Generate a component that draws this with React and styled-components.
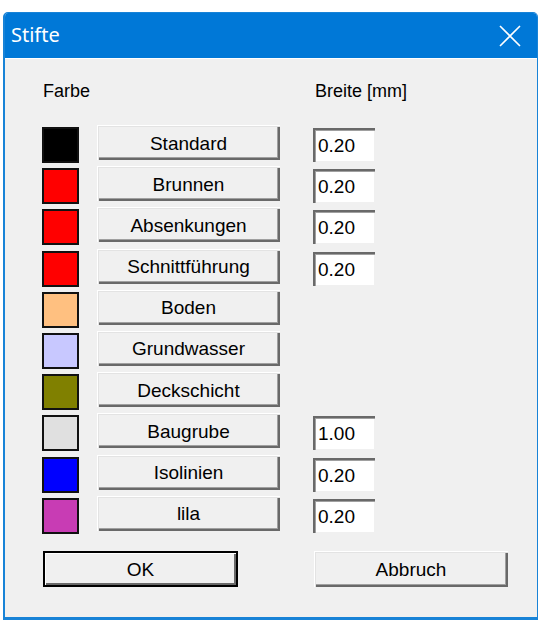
import React from 'react';
import styled, { createGlobalStyle } from 'styled-components';

const GlobalStyle = createGlobalStyle`
  html, body {
    margin: 0;
    padding: 0;
    background: #ffffff;
  }
  body {
    font-family: "Liberation Sans", Arial, sans-serif;
  }
`;

const Window = styled.div`
  margin: 12px 0 0 3px;
  width: 535px;
  height: 608px;
  box-sizing: border-box;
  border: 1px solid #1883d7;
  border-left-width: 2px;
  border-bottom-width: 3px;
  border-radius: 5px 5px 0 0;
  background: #f0f0f0;
  display: flex;
  flex-direction: column;
  overflow: hidden;
`;

const TitleBar = styled.div`
  height: 45px;
  background: #0078d7;
  display: flex;
  align-items: center;
  justify-content: space-between;
  padding: 0 16px 0 6px;
  flex-shrink: 0;
`;

const Title = styled.span`
  font-family: "Noto Sans", "Open Sans", sans-serif;
  font-size: 20px;
  color: #ffffff;
  padding-bottom: 2px;
`;

const Body = styled.div`
  flex: 1;
  border-top: 1px solid #ffffff;
  padding: 21px 0 0 37px;
  display: flex;
  flex-direction: column;
`;

const HeaderRow = styled.div`
  display: flex;
  height: 22px;
  margin-bottom: 23px;
`;

const Label = styled.span`
  font-size: 18px;
  color: #000;
  line-height: 22px;
  width: ${({ $w }) => $w}px;
  padding-left: 1px;
`;

const Rows = styled.div`
  display: flex;
  flex-direction: column;
  gap: 6px;
`;

const Row = styled.div`
  display: flex;
  align-items: flex-start;
  height: 35.2px;
`;

const Swatch = styled.div`
  width: 37px;
  height: 36px;
  box-sizing: border-box;
  border: 2px solid #111;
  background: ${({ $c }) => $c};
  margin-top: 2px;
  margin-right: 18px;
  flex-shrink: 0;
`;

const RaisedButton = styled.button`
  width: ${({ $w }) => $w}px;
  height: ${({ $h }) => $h || 35}px;
  box-sizing: border-box;
  background: #f0f0f0;
  font-family: "Liberation Sans", Arial, sans-serif;
  font-size: 19px;
  color: #000;
  padding: 2px 0 0 0;
  border: none;
  border-radius: 0;
  box-shadow: ${({ $default }) =>
    $default
      ? 'inset 2px 2px 0 #000, inset -2px -2px 0 #000, inset 3px 3px 0 #ffffff, inset -4px -4px 0 #696969'
      : 'inset 1px 1px 0 #ffffff, inset 2px 2px 0 #e3e3e3, inset -2px -2px 0 #696969, inset -3px -3px 0 #a0a0a0'};
  flex-shrink: 0;
`;

const Spacer = styled.div`
  width: 33px;
  flex-shrink: 0;
`;

const Field = styled.input`
  width: 62px;
  height: 34px;
  margin-top: 3px;
  box-sizing: border-box;
  border: none;
  outline: none;
  background: #ffffff;
  font-family: "Liberation Sans", Arial, sans-serif;
  font-size: 19px;
  color: #000;
  padding: 2px 0 0 5px;
  box-shadow: inset 2px 2px 0 #696969, inset 3px 3px 0 #a0a0a0, inset -1px -1px 0 #f0f0f0;
`;

const Footer = styled.div`
  display: flex;
  margin-top: 20px;
  padding-left: 1px;
  gap: 76px;
`;

const CloseIcon = () => (
  <svg width="22" height="22" viewBox="0 0 22 22">
    <path d="M1 1 L21 21 M21 1 L1 21" stroke="#ffffff" strokeWidth="1.6" fill="none" />
  </svg>
);

const pens = [
  { name: 'Standard', color: '#000000', width: '0.20' },
  { name: 'Brunnen', color: '#ff0000', width: '0.20' },
  { name: 'Absenkungen', color: '#ff0000', width: '0.20' },
  { name: 'Schnittführung', color: '#ff0000', width: '0.20' },
  { name: 'Boden', color: '#ffc080', width: null },
  { name: 'Grundwasser', color: '#c8c8ff', width: null },
  { name: 'Deckschicht', color: '#808000', width: null },
  { name: 'Baugrube', color: '#e0e0e0', width: '1.00' },
  { name: 'Isolinien', color: '#0000ff', width: '0.20' },
  { name: 'lila', color: '#c83cb4', width: '0.20' },
];

export default function App() {
  return (
    <>
      <GlobalStyle />
      <Window>
        <TitleBar>
          <Title>Stifte</Title>
          <CloseIcon />
        </TitleBar>
        <Body>
          <HeaderRow>
            <Label $w={271}>Farbe</Label>
            <Label $w={120}>Breite [mm]</Label>
          </HeaderRow>
          <Rows>
            {pens.map((p) => (
              <Row key={p.name}>
                <Swatch $c={p.color} />
                <RaisedButton $w={183}>{p.name}</RaisedButton>
                <Spacer />
                {p.width && <Field defaultValue={p.width} />}
              </Row>
            ))}
          </Rows>
          <Footer>
            <RaisedButton $w={195} $h={36} $default>OK</RaisedButton>
            <RaisedButton $w={194} $h={36}>Abbruch</RaisedButton>
          </Footer>
        </Body>
      </Window>
    </>
  );
}
